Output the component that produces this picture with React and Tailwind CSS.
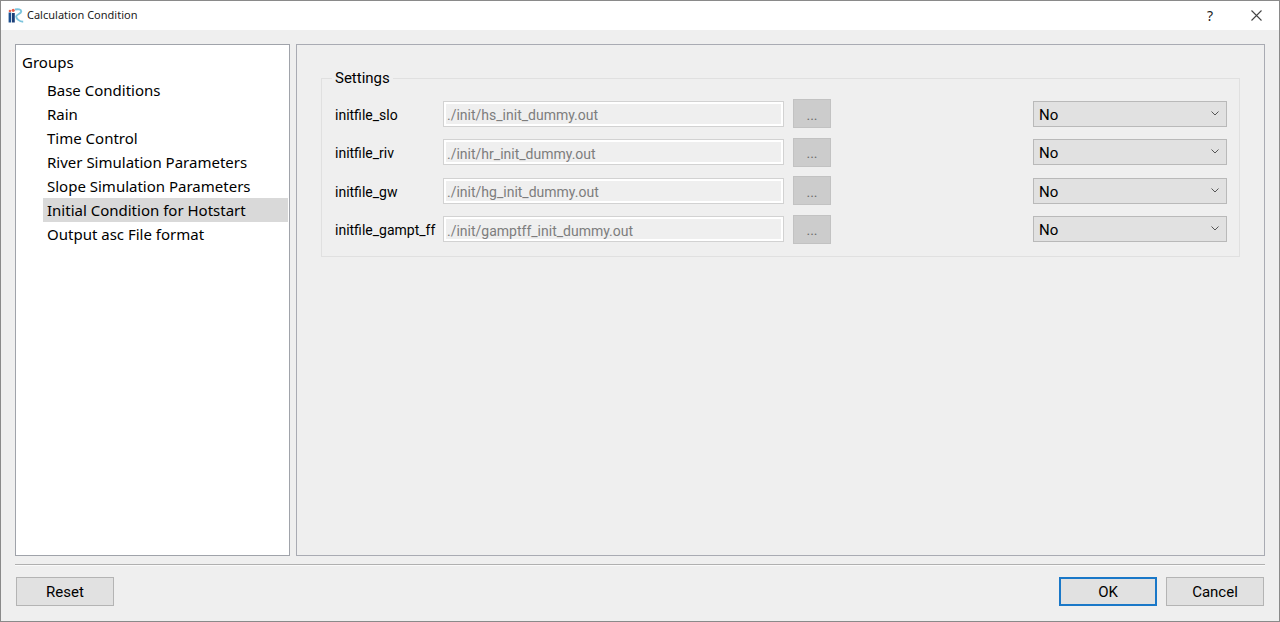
import { useState } from "react";

const groups = [
  "Base Conditions",
  "Rain",
  "Time Control",
  "River Simulation Parameters",
  "Slope Simulation Parameters",
  "Initial Condition for Hotstart",
  "Output asc File format",
];

const files = [
  { name: "initfile_slo", path: "./init/hs_init_dummy.out" },
  { name: "initfile_riv", path: "./init/hr_init_dummy.out" },
  { name: "initfile_gw", path: "./init/hg_init_dummy.out" },
  { name: "initfile_gampt_ff", path: "./init/gamptff_init_dummy.out" },
];

function Logo() {
  return (
    <svg aria-hidden="true" viewBox="0 0 16 16" className="size-4">
      <path d="M.6 4.500h2.600V14.500H.6z" fill="#1c4f8f" />
      <path d="M4 5h2.800v9.500H4z" fill="#1d3f78" />
      <circle cx="1.900" cy="2.900" r="1.200" fill="#e8604c" />
      <circle cx="5.200" cy="2.300" r="1.600" fill="#e8604c" />
      <path
        d="M7 1.500C10 .8 13.400 1.200 13.200 3.600c-.2 2.400-5.200 3-5 5 .2 2 2.800 5 7 5.200"
        fill="none"
        stroke="#7cc4dc"
        strokeWidth="1.900"
      />
    </svg>
  );
}

function TitleBar() {
  return (
    <header className="flex h-[29px] items-center bg-white pl-[7px] text-[#1c1c1c]">
      <Logo />
      <h1 className="ml-[3px] flex-1 text-[11px]">Calculation Condition</h1>
      <button type="button" aria-label="Help" className="h-full w-[46px] text-sm">
        ?
      </button>
      <button type="button" aria-label="Close" className="flex h-full w-[46px] items-center justify-center">
        <svg viewBox="0 0 11 11" className="size-[11px]" aria-hidden="true">
          <path d="M.5.5l10 10M10.500.5l-10 10" stroke="#444" strokeWidth="1.100" />
        </svg>
      </button>
    </header>
  );
}

function GroupTree({ selected, onSelect }) {
  return (
    <nav aria-label="Groups" className="w-[275px] shrink-0 border border-[#a0a3aa] bg-white text-[15px]">
      <h2 className="flex h-[33px] items-center pl-1.5 pt-px">Groups</h2>
      <ul className="pl-[27px] pr-px">
        {groups.map((group) => (
          <li key={group}>
            <button
              type="button"
              onClick={() => onSelect(group)}
              className={
                "block h-6 w-full whitespace-nowrap pl-1 text-left leading-6 " +
                (group === selected ? "bg-[#d9d9d9]" : "")
              }
            >
              {group}
            </button>
          </li>
        ))}
      </ul>
    </nav>
  );
}

function FileRow({ name, path }) {
  return (
    <div className="grid grid-cols-[99px_minmax(0,341px)_38px_1fr] items-center gap-x-[9px]">
      <label htmlFor={name} className="whitespace-nowrap pt-0.5 text-sm">
        {name}
      </label>
      <input
        id={name}
        type="text"
        disabled
        defaultValue={path}
        className="h-[26px] w-full border border-[#d2d2d2] bg-[#efefef] px-[3px] pt-[3px] text-sm text-[#7d7d7d] shadow-[inset_0_0_0_2px_#fff]"
      />
      <button
        type="button"
        disabled
        aria-label={"Browse for " + name}
        className="h-[29px] border border-[#c2c2c2] bg-[#cccccc] pt-0.5 text-sm text-[#6d6d6d]"
      >
        ...
      </button>
      <div className="relative w-[194px] justify-self-end">
        <select
          aria-label={"Use " + name}
          defaultValue="No"
          className="block h-[26px] w-full appearance-none border border-[#b9b9b9] bg-[#e1e1e1] pl-[5px] pt-0.5"
        >
          <option>No</option>
          <option>Yes</option>
        </select>
        <svg viewBox="0 0 8 5" aria-hidden="true" className="pointer-events-none absolute right-2 top-2.5 h-[5px] w-2">
          <path d="M.5.5L4 4 7.500.5" fill="none" stroke="#555" />
        </svg>
      </div>
    </div>
  );
}

function DialogButton({ primary, children }) {
  return (
    <button
      type="button"
      className={
        "h-[29px] w-[98px] bg-[#e1e1e1] pt-px " +
        (primary ? "border-2 border-[#1a78c8]" : "border border-[#b4b4b4]")
      }
    >
      {children}
    </button>
  );
}

export default function App() {
  const [selected, setSelected] = useState("Initial Condition for Hotstart");
  return (
    <div className="flex min-h-screen flex-col border border-[#8a8a8a] bg-[#efefef] font-['Noto_Sans',sans-serif] text-black">
      <TitleBar />
      <main className="mx-3.5 mt-3.5 flex flex-1 gap-1.5">
        <GroupTree selected={selected} onSelect={setSelected} />
        <section className="min-w-0 flex-1 border border-[#a9abb3] px-6 pt-[23px] font-[Roboto,sans-serif] text-[15px]">
          <fieldset className="border border-[#e0e0e0] pb-3 pl-2.5 pr-3">
            <legend className="px-[3px] leading-5">Settings</legend>
            <div className="grid min-h-[156px] content-between pl-[3px] pt-[11px]">
              {files.map((file) => (
                <FileRow key={file.name} {...file} />
              ))}
            </div>
          </fieldset>
        </section>
      </main>
      <footer className="mx-3.5 mt-2 flex gap-[9px] border-t border-[#b0b0b0] px-px pb-[15px] pt-3 font-[Roboto,sans-serif] text-[15px] shadow-[inset_0_1px_0_#fafafa]">
        <DialogButton>Reset</DialogButton>
        <div className="flex-1" />
        <DialogButton primary>OK</DialogButton>
        <DialogButton>Cancel</DialogButton>
      </footer>
    </div>
  );
}
